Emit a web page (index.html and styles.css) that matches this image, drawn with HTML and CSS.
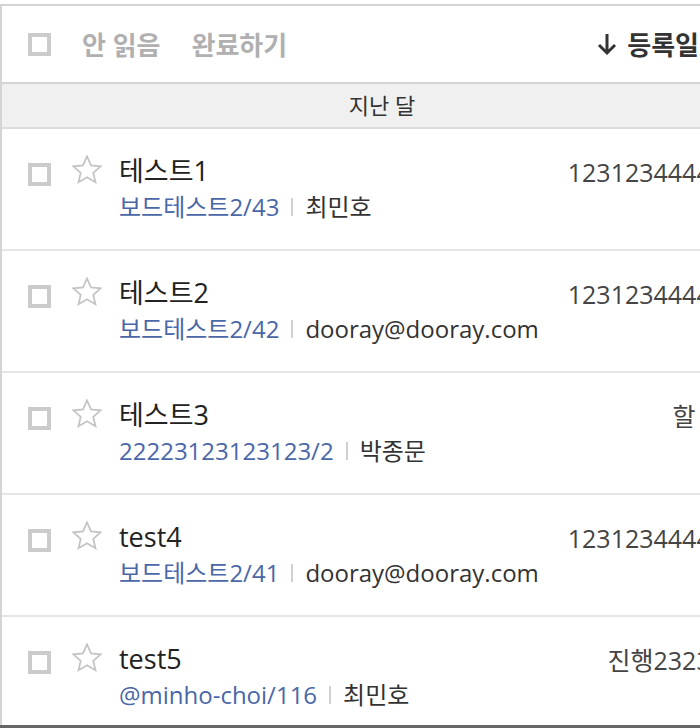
FILE: index.html
```html
<!DOCTYPE html>
<html lang="ko">
<head>
    <meta charset="UTF-8">
    <meta name="viewport" content="width=device-width, initial-scale=1.0">
    <title>업무 목록</title>
    <link rel="stylesheet" href="styles.css">
</head>
<body>
    <div class="page">
        <div class="panel">
            <!-- 상단 툴바 -->
            <div class="toolbar">
                <span class="checkbox"></span>
                <span class="toolbar-btn">안 읽음</span>
                <span class="toolbar-btn">완료하기</span>
                <span class="sort">
                    <svg class="sort-icon" width="22" height="24" viewBox="0 0 22 24">
                        <path d="M11 2 V21 M3 13 L11 21 L19 13" fill="none" stroke="#333" stroke-width="3"/>
                    </svg>
                    등록일
                </span>
            </div>

            <div class="group-title">지난 달</div>

            <!-- 업무 목록 -->
            <ul class="task-list">
                <li class="task">
                    <span class="checkbox"></span>
                    <svg class="star" width="30" height="30" viewBox="1 1 22 22"><polygon points="12,2 14.9,8.6 22,9.3 16.6,14 18.2,21 12,17.3 5.8,21 7.4,14 2,9.3 9.1,8.6"/></svg>
                    <div class="task-body">
                        <div class="task-title">테스트1</div>
                        <div class="task-meta">
                            <a href="#" class="project">보드테스트2/43</a>
                            <span class="sep"></span>
                            <span class="author">최민호</span>
                        </div>
                    </div>
                    <div class="task-side">12312344444</div>
                </li>
                <li class="task">
                    <span class="checkbox"></span>
                    <svg class="star" width="30" height="30" viewBox="1 1 22 22"><polygon points="12,2 14.9,8.6 22,9.3 16.6,14 18.2,21 12,17.3 5.8,21 7.4,14 2,9.3 9.1,8.6"/></svg>
                    <div class="task-body">
                        <div class="task-title">테스트2</div>
                        <div class="task-meta">
                            <a href="#" class="project">보드테스트2/42</a>
                            <span class="sep"></span>
                            <span class="author">dooray@dooray.com</span>
                        </div>
                    </div>
                    <div class="task-side">12312344444</div>
                </li>
                <li class="task">
                    <span class="checkbox"></span>
                    <svg class="star" width="30" height="30" viewBox="1 1 22 22"><polygon points="12,2 14.9,8.6 22,9.3 16.6,14 18.2,21 12,17.3 5.8,21 7.4,14 2,9.3 9.1,8.6"/></svg>
                    <div class="task-body">
                        <div class="task-title">테스트3</div>
                        <div class="task-meta">
                            <a href="#" class="project">22223123123123/2</a>
                            <span class="sep"></span>
                            <span class="author">박종문</span>
                        </div>
                    </div>
                    <div class="task-side">할 일</div>
                </li>
                <li class="task">
                    <span class="checkbox"></span>
                    <svg class="star" width="30" height="30" viewBox="1 1 22 22"><polygon points="12,2 14.9,8.6 22,9.3 16.6,14 18.2,21 12,17.3 5.8,21 7.4,14 2,9.3 9.1,8.6"/></svg>
                    <div class="task-body">
                        <div class="task-title">test4</div>
                        <div class="task-meta">
                            <a href="#" class="project">보드테스트2/41</a>
                            <span class="sep"></span>
                            <span class="author">dooray@dooray.com</span>
                        </div>
                    </div>
                    <div class="task-side">12312344444</div>
                </li>
                <li class="task">
                    <span class="checkbox"></span>
                    <svg class="star" width="30" height="30" viewBox="1 1 22 22"><polygon points="12,2 14.9,8.6 22,9.3 16.6,14 18.2,21 12,17.3 5.8,21 7.4,14 2,9.3 9.1,8.6"/></svg>
                    <div class="task-body">
                        <div class="task-title">test5</div>
                        <div class="task-meta">
                            <a href="#" class="project">@minho-choi/116</a>
                            <span class="sep"></span>
                            <span class="author">최민호</span>
                        </div>
                    </div>
                    <div class="task-side">진행23232</div>
                </li>
            </ul>
        </div>
        <div class="bottom-bar"></div>
    </div>
</body>
</html>
```

FILE: styles.css
```css
/* 기본 스타일 */
* {
    margin: 0;
    padding: 0;
    box-sizing: border-box;
}

body {
    font-family: "Open Sans", "Noto Sans CJK KR", sans-serif;
    background-color: #fff;
    color: #222;
    overflow: hidden;
}

.page {
    height: 728px;
    padding-top: 4px;
    display: flex;
    flex-direction: column;
}

.panel {
    flex: 1;
    width: 762px;
    overflow: hidden;
    border-top: 2px solid #d4d4d4;
    border-left: 2px solid #d4d4d4;
}

.bottom-bar {
    height: 3px;
    background-color: #666;
}

/* 체크박스 */
.checkbox {
    display: block;
    flex-shrink: 0;
    width: 23px;
    height: 23px;
    border: 4px solid #cbcbcb;
    background-color: #fff;
}

/* 툴바 */
.toolbar {
    height: 78px;
    display: flex;
    align-items: center;
    padding-left: 26px;
    border-bottom: 2px solid #d4d4d4;
}

.toolbar-btn {
    margin-left: 31px;
    font-size: 26px;
    font-weight: 700;
    color: #b0b0b0;
}

.sort {
    margin-left: auto;
    margin-right: 63px;
    display: flex;
    align-items: center;
    font-size: 26px;
    font-weight: 700;
    color: #333;
}

.sort-icon {
    margin-right: 9px;
}

/* 그룹 구분 */
.group-title {
    height: 45px;
    line-height: 43px;
    text-align: center;
    font-size: 22px;
    color: #333;
    background-color: #f0f0f0;
    border-bottom: 2px solid #dcdcdc;
}

/* 업무 목록 */
.task-list {
    list-style: none;
}

.task {
    height: 122px;
    display: flex;
    align-items: flex-start;
    padding: 22px 0 0 26px;
    border-bottom: 2px solid #e6e6e6;
}

.task .checkbox {
    margin-top: 12px;
}

.star {
    margin: 4px 17px 0 21px;
    flex-shrink: 0;
    fill: none;
    stroke: #c4c4c4;
    stroke-width: 1.3;
}

.task-body {
    flex: 1;
    min-width: 0;
    padding-top: 2px;
    white-space: nowrap;
}

.task-title {
    font-size: 27px;
    line-height: 36px;
    color: #222;
}

.task-meta {
    display: flex;
    align-items: center;
    font-size: 24px;
    line-height: 36px;
    color: #333;
}

.project {
    flex-shrink: 0;
    color: #4a67a8;
    text-decoration: none;
}

.sep {
    flex-shrink: 0;
    width: 2px;
    height: 18px;
    margin: 0 12px;
    background-color: #d0d0d0;
}

.task-side {
    flex-shrink: 0;
    width: 160px;
    margin: 3px 37px 0 0;
    text-align: right;
    white-space: nowrap;
    font-size: 25px;
    line-height: 36px;
    color: #444;
}
```
